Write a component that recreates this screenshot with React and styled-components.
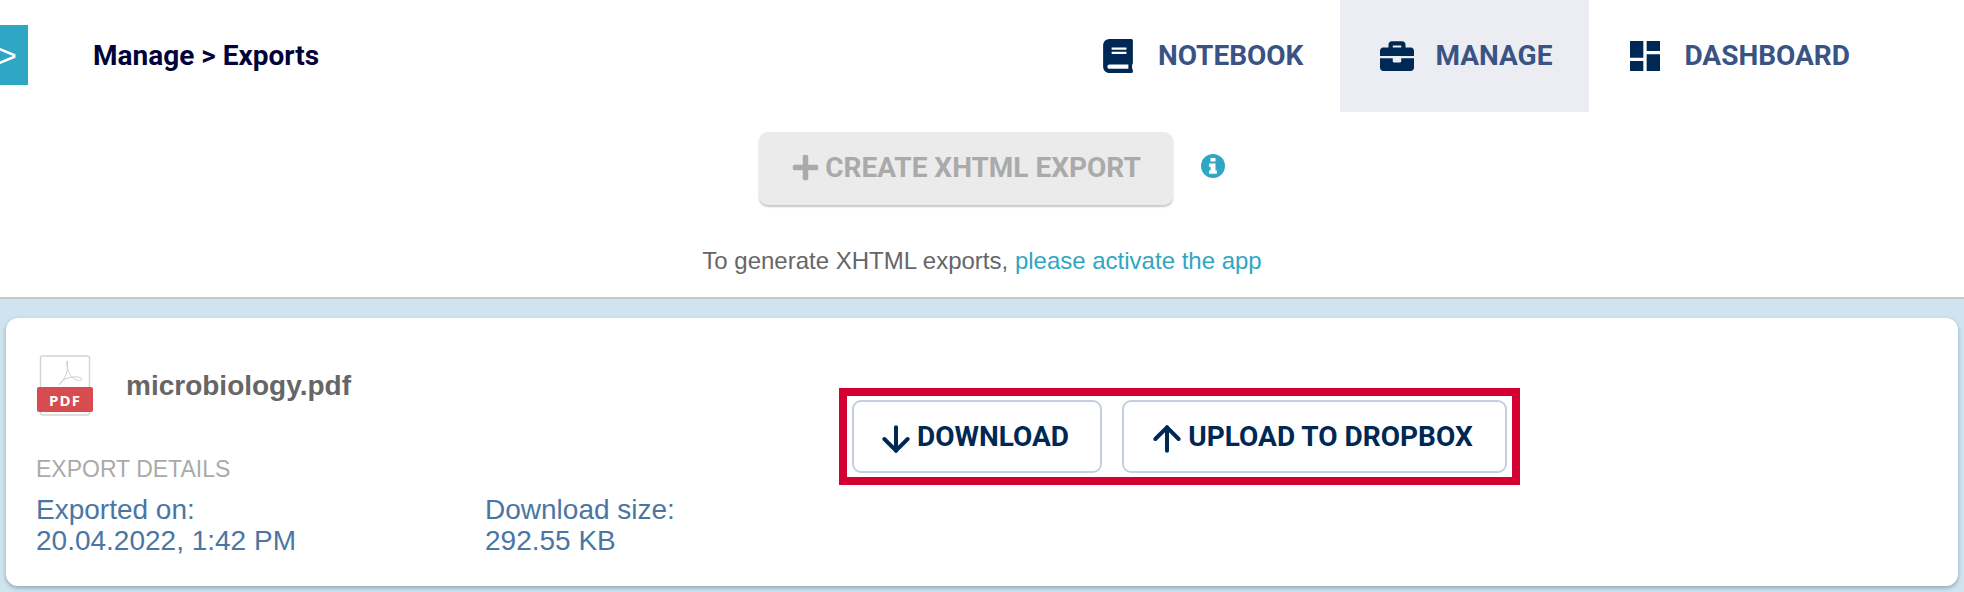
import React from 'react'
import styled, { createGlobalStyle } from 'styled-components'
import { FaBook, FaBriefcase, FaPlus } from 'react-icons/fa'
import { MdDashboard } from 'react-icons/md'
import { ArrowDown, ArrowUp } from 'lucide-react'

const Global = createGlobalStyle`
  html, body { margin: 0; padding: 0; background: #fff; }
  body { font-family: "Liberation Sans", Arial, sans-serif; }
`

const Page = styled.div`
  width: 1964px;
  height: 592px;
  overflow: hidden;
  display: flex;
  flex-direction: column;
`

const Header = styled.header`
  height: 112px;
  display: flex;
  align-items: center;
  font-family: Roboto, sans-serif;
`

const Toggle = styled.div`
  width: 28px;
  height: 60px;
  margin-top: -2px;
  background: #2fa6c3;
  color: #fff;
  font-family: "Liberation Sans", sans-serif;
  font-size: 34px;
  line-height: 60px;
  overflow: hidden;
  text-indent: -3px;
`

const Title = styled.h1`
  margin: -2px 0 0 65px;
  font-size: 28px;
  font-weight: 700;
  color: #02023a;
  flex: 1;
`

const Tabs = styled.nav`
  display: flex;
  align-self: stretch;
  margin-right: 77px;
`

const Tab = styled.a`
  display: flex;
  align-items: center;
  gap: ${p => p.$gap}px;
  height: 112px;
  box-sizing: border-box;
  padding: 0 37px 2px ${p => p.$left}px;
  background: ${p => (p.$active ? '#ebedf2' : 'transparent')};
  color: #3a5385;
  font-size: 28px;
  font-weight: 700;
  svg { color: #002855; flex: none; margin-top: 2px; }
`

const Toolbar = styled.div`
  height: 92px;
  display: flex;
  align-items: flex-start;
  padding: 20px 0 0 759px;
  gap: 28px;
  font-family: Roboto, sans-serif;
`

const CreateButton = styled.button`
  width: 414px;
  height: 73px;
  display: flex;
  align-items: center;
  justify-content: center;
  gap: 5px;
  border: 0;
  border-radius: 9px;
  background: #ebebeb;
  box-shadow: 0 2px 2px rgba(0, 0, 0, 0.22);
  color: #aaa;
  font-family: inherit;
  font-size: 28px;
  font-weight: 700;
  padding: 0 0 2px;
`

const InfoBadge = styled.svg`
  margin-top: 22px;
  width: 24px;
  height: 24px;
`

const Hint = styled.p`
  margin: 0;
  height: 93px;
  box-sizing: border-box;
  padding-top: 35px;
  text-align: center;
  font-size: 24px;
  line-height: 28px;
  color: #666;
  a { color: #2fa6c3; }
`

const Content = styled.main`
  flex: 1;
  border-top: 2px solid #c8c8c8;
  background: #cfe4ee;
  padding: 19px 6px 6px;
`

const Card = styled.section`
  height: 268px;
  box-sizing: border-box;
  display: flex;
  padding: 37px 30px 0;
  background: #fff;
  border-radius: 12px;
  box-shadow: 0 2px 4px rgba(40, 80, 100, 0.4);
`

const Info = styled.div`
  width: 803px;
  flex: none;
`

const FileRow = styled.div`
  display: flex;
  align-items: center;
  gap: 31px;
  margin-bottom: 36px;
  padding-left: 1px;
`

const FileName = styled.span`
  font-size: 28px;
  font-weight: 700;
  color: #666;
  margin-top: -3px;
`

const DetailsLabel = styled.div`
  font-size: 23px;
  line-height: 28px;
  color: #aaa;
  margin-bottom: 11px;
`

const Details = styled.div`
  display: flex;
`

const Detail = styled.div`
  width: ${p => p.$width}px;
  font-size: 28px;
  line-height: 31px;
  color: #4a76a4;
`

const Actions = styled.div`
  align-self: flex-start;
  display: flex;
  gap: 20px;
  margin-top: 33px;
  padding: 4px 5px;
  border: 8px solid #d40032;
  background: #fff;
`

const ActionButton = styled.button`
  width: ${p => p.$width}px;
  height: 73px;
  display: flex;
  align-items: center;
  justify-content: center;
  gap: 9px;
  padding: 0 1px 0 0;
  background: #fff;
  border: 2px solid #c5cfe0;
  border-radius: 9px;
  color: #002855;
  font-family: Roboto, sans-serif;
  font-size: 28px;
  font-weight: 700;
  svg { margin: 4px -8px 0; flex: none; }
`

const PdfIcon = () => (
  <svg width="58" height="64" viewBox="0 0 58 64">
    <rect x="3.5" y="1" width="49" height="59" rx="2" fill="#fff" stroke="#d4d4d4" strokeWidth="1.4" />
    <path d="M22 30c6-6 10-14 8-24-1 8 3 14 6 17 4 3 8 3 9 1 0-2-8-3-14-1-4 1-7 3-9 7z" fill="none" stroke="#cfcfcf" strokeWidth="1" />
    <rect y="32" width="56" height="25" rx="2" fill="#d64c4f" />
    <text x="28" y="50.5" textAnchor="middle" fontFamily="Open Sans, sans-serif" fontWeight="700" fontSize="15" letterSpacing="1" fill="#fff">PDF</text>
  </svg>
)

const InfoIcon = () => (
  <InfoBadge viewBox="0 0 24 24">
    <circle cx="12" cy="12" r="12" fill="#2fa6c3" />
    <rect x="9.5" y="4" width="5" height="3.6" rx="0.6" fill="#fff" />
    <path d="M8 9.6h6.5v7H16v3.2H8v-3.2h1.6v-3.8H8z" fill="#fff" />
  </InfoBadge>
)

const App = () => (
  <Page>
    <Global />
    <Header>
      <Toggle>&gt;</Toggle>
      <Title>Manage &gt; Exports</Title>
      <Tabs>
        <Tab $left={0} $gap={23}><FaBook size={34} />NOTEBOOK</Tab>
        <Tab $active $left={40} $gap={21}><FaBriefcase size={34} />MANAGE</Tab>
        <Tab $left={36} $gap={19}><MdDashboard size={40} />DASHBOARD</Tab>
      </Tabs>
    </Header>
    <Toolbar>
      <CreateButton disabled><FaPlus size={29} />CREATE XHTML EXPORT</CreateButton>
      <InfoIcon />
    </Toolbar>
    <Hint>To generate XHTML exports, <a>please activate the app</a></Hint>
    <Content>
      <Card>
        <Info>
          <FileRow>
            <PdfIcon />
            <FileName>microbiology.pdf</FileName>
          </FileRow>
          <DetailsLabel>EXPORT DETAILS</DetailsLabel>
          <Details>
            <Detail $width={449}>Exported on:<br />20.04.2022, 1:42 PM</Detail>
            <Detail $width={300}>Download size:<br />292.55 KB</Detail>
          </Details>
        </Info>
        <Actions>
          <ActionButton $width={250}><ArrowDown size={40} strokeWidth={2.4} />DOWNLOAD</ActionButton>
          <ActionButton $width={385}><ArrowUp size={40} strokeWidth={2.4} />UPLOAD TO DROPBOX</ActionButton>
        </Actions>
      </Card>
    </Content>
  </Page>
)

export default App
